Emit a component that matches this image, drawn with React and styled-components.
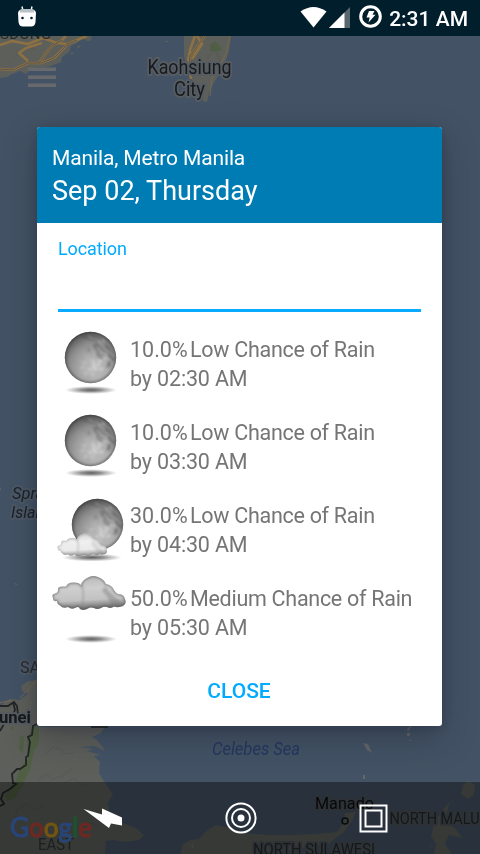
import React from "react";
import styled, { createGlobalStyle } from "styled-components";

const GlobalStyle = createGlobalStyle`
  * { box-sizing: border-box; }
  body { margin: 0; font-family: Roboto, sans-serif; background: #435365; }
`;

const Screen = styled.div`
  position: relative;
  width: 480px;
  height: 854px;
  overflow: hidden;
  display: flex;
  flex-direction: column;
`;

const MapCanvas = styled.svg`
  position: absolute;
  inset: 0;
  font-family: Roboto, sans-serif;
`;

const StatusBar = styled.header`
  position: relative;
  height: 36px;
  flex: none;
  display: flex;
  align-items: flex-start;
  justify-content: space-between;
  background: #001e2b;
  padding: 0 12px 0 17px;
  color: #fff;
`;

const StatusIcons = styled.div`
  display: flex;
  align-items: flex-start;
  height: 36px;
`;

const Clock = styled.time`
  font-size: 21px;
  font-weight: 500;
  line-height: 25px;
  margin: 7px 0 0 7px;
  white-space: nowrap;
`;

const Main = styled.main`
  position: relative;
  flex: 1;
  padding: 91px 38px 0 37px;
`;

const Dialog = styled.section`
  height: 599px;
  border-radius: 3px;
  overflow: hidden;
  background: #fff;
  display: flex;
  flex-direction: column;
  box-shadow: 0 12px 34px rgba(20, 22, 38, 0.32), 0 2px 12px rgba(20, 22, 38, 0.18);
`;

const DialogHeader = styled.div`
  height: 96px;
  flex: none;
  background: #007cb5;
  color: #fff;
  padding: 19px 15px 0;
  white-space: nowrap;
`;

const Place = styled.div`
  font-size: 21px;
  line-height: 25px;
  letter-spacing: -0.13px;
`;

const DateTitle = styled.h1`
  margin: 4px 0 0;
  font-size: 27px;
  line-height: 32px;
  font-weight: 400;
`;

const Field = styled.label`
  display: block;
  height: 89px;
  flex: none;
  margin: 0 21px;
  padding-top: 15px;
  border-bottom: 3px solid #0aabff;
  color: #00aaff;
  font-size: 18px;
  line-height: 21px;
  letter-spacing: -0.1px;
`;

const ForecastList = styled.ul`
  list-style: none;
  margin: 0;
  padding: 14px 0 0 15px;
`;

const ForecastRow = styled.li`
  display: flex;
  height: 83px;
`;

const WeatherIcon = styled.svg`
  width: 75px;
  height: 75px;
  flex: none;
  margin-top: -2px;
`;

const ForecastText = styled.div`
  margin: 9px 0 0 3px;
  color: #757575;
  font-size: 21.5px;
  line-height: 29px;
  letter-spacing: -0.28px;
  white-space: nowrap;
`;

const Chance = styled.div`
  display: flex;
`;

const Percent = styled.span`
  width: 60px;
  letter-spacing: 0;
`;

const Time = styled.div`
  letter-spacing: -0.15px;
`;

const CloseButton = styled.button`
  align-self: center;
  margin: 21px 0 0 -1px;
  border: 0;
  padding: 0;
  background: none;
  color: #00aaff;
  font: 500 21px/25px Roboto, sans-serif;
`;

const NavBar = styled.nav`
  position: relative;
  height: 72px;
  flex: none;
  display: flex;
  align-items: center;
  justify-content: space-between;
  padding: 0 92px 0 83px;
  background: rgba(0, 0, 0, 0.4);
`;

const NavIcon = styled.svg`
  flex: none;
  display: block;
`;

const forecast = [
  { id: "a", kind: "moon", pct: "10.0%", text: "Low Chance of Rain", time: "by 02:30 AM" },
  { id: "b", kind: "moon", pct: "10.0%", text: "Low Chance of Rain", time: "by 03:30 AM" },
  { id: "c", kind: "partly", pct: "30.0%", text: "Low Chance of Rain", time: "by 04:30 AM" },
  { id: "d", kind: "cloud", pct: "50.0%", text: "Medium Chance of Rain", time: "by 05:30 AM" },
];

function Moon({ cx, cy, id }) {
  return (
    <g transform={`translate(${cx - 26} ${cy - 26})`}>
      <defs>
        <radialGradient id={`m${id}`} cx="0.58" cy="0.7" r="0.76">
          <stop offset="0" stopColor="#c2c2c2" />
          <stop offset="0.35" stopColor="#adadad" />
          <stop offset="0.65" stopColor="#8c8c8c" />
          <stop offset="0.85" stopColor="#666" />
          <stop offset="1" stopColor="#404040" />
        </radialGradient>
        <clipPath id={`c${id}`}><circle cx="26" cy="26" r="25.7" /></clipPath>
        <filter id={`b${id}`}><feGaussianBlur stdDeviation="1" /></filter>
        <filter id={`h${id}`}><feGaussianBlur stdDeviation="0.8" /></filter>
      </defs>
      <circle cx="26" cy="26" r="25.7" fill={`url(#m${id})`} />
      <g clipPath={`url(#c${id})`}>
        <circle cx="26" cy="26" r="25.7" fill="none" stroke="#333" strokeWidth="3" opacity=".45" filter={`url(#b${id})`} />
        <g filter={`url(#b${id})`} fill="#505050">
          <path d="M13 5l8-2 9 1 7 4-5 2-10-3z" opacity=".45" />
          <path d="M28 13l5-2 3 4 5 1 1 5-6-1-6-2z" opacity=".4" />
          <path d="M40 12l5 3 4 6 2 8-3 1-4-5-2-6z" opacity=".5" />
          <path d="M31 19l5 1 4 5-3 3-5-3z" opacity=".35" />
          <path d="M43 30l4 0-1 5-4 2z" opacity=".5" />
          <path d="M22 16l4 1 0 4-3 0z" opacity=".25" />
        </g>
        <g filter={`url(#h${id})`} fill="none" stroke="#dedede" strokeLinecap="round">
          <path d="M24 5l4 2 5 1 3 3M38 8l2 2M33 16l3 3 1 3M38 17l4 1 3 3M38 25l2 2 3 0M46 21l3 4" strokeWidth="1.2" opacity=".45" />
          <path d="M28 29l2 3-1 4 3 2M33 34l2-2M25 38h1M20 31h.1M18 36h.1M36 38l2-1M28 43h.1M21 42h.1M34 29l3 1" strokeWidth="2" opacity=".6" />
        </g>
        <g filter={`url(#h${id})`} stroke="#777" fill="none" opacity=".35">
          <path d="M17 26l2 2M23 33l2 1M13 32l2 1M32 42l2-2M38 33l2 2M26 24l2-1M17 15l2-1M22 46l3 0" />
        </g>
      </g>
    </g>
  );
}

const cloudPath =
  "M1 22Q-1 18 3 17.500Q5 17 6 15Q5 10 11 10.500Q13 10.500 14 10.500Q16 6 22 6.500Q27 6 29 9Q30 4 36 1.500Q41 -1 46 1Q52 3 54 8Q60 9 62 14Q64 17 66 18Q72 18 73 23Q75 28 71 30Q66 32 62 30.500Q59 33 55 31Q52 30 49 32Q45 34 42 32Q38 31 36 32.500Q32 35 28 33Q27 30 24 31.500Q20 34 16 31Q11 33 8 29.500Q5 28 5 25Q1 26 1 22Z";

function Cloud({ id, transform, light }) {
  return (
    <g transform={transform}>
      <defs>
        <linearGradient id={`g${id}`} x1="0" y1="0" x2="0.12" y2="1">
          <stop offset="0" stopColor={light ? "#d0d0d0" : "#b5b5b5"} />
          <stop offset="0.4" stopColor={light ? "#efefef" : "#cecece"} />
          <stop offset="0.75" stopColor={light ? "#eaeaea" : "#c2c2c2"} />
          <stop offset="1" stopColor={light ? "#a0a0a0" : "#707070"} />
        </linearGradient>
        <filter id={`f${id}`}><feGaussianBlur stdDeviation="1.3" /></filter>
        <clipPath id={`k${id}`}><path d={cloudPath} /></clipPath>
      </defs>
      <path d={cloudPath} fill={`url(#g${id})`} />
      <g clipPath={`url(#k${id})`}>
        <g filter={`url(#f${id})`}>
          <path d="M30 9q2 8 1 14q-1 6 0 10" stroke="#888" strokeWidth="1.6" fill="none" opacity=".5" />
          <path d="M53 10q4 6 11 12l9 8h-14q-2-9-9-15z" fill="#777" opacity={light ? 0.2 : 0.4} />
        </g>
        <path d={cloudPath} fill="none" stroke="#555" strokeWidth="2.2" opacity={light ? 0.4 : 0.6} filter={`url(#f${id})`} />
      </g>
    </g>
  );
}

function Weather({ kind, id }) {
  const partly = kind === "partly";
  return (
    <WeatherIcon viewBox="0 0 75 75">
      <defs>
        <radialGradient id={`s${id}`}>
          <stop offset="0" stopColor="#606060" />
          <stop offset="0.4" stopColor="#777" stopOpacity=".8" />
          <stop offset="0.75" stopColor="#999" stopOpacity=".4" />
          <stop offset="1" stopColor="#aaa" stopOpacity="0" />
        </radialGradient>
      </defs>
      <ellipse cx={partly ? 40 : 39} cy={partly ? 67.5 : 66} rx={partly ? 30 : 26} ry="4" fill={`url(#s${id})`} />
      {kind === "moon" && <Moon cx={38.5} cy={33.5} id={id} />}
      {partly && <Moon cx={45.5} cy={34.5} id={id} />}
      {partly && <Cloud id={id} transform="translate(5 43.500) scale(.68)" light />}
      {kind === "cloud" && <Cloud id={id} transform="translate(0 3)" />}
    </WeatherIcon>
  );
}

function MapBackground() {
  const halo = { paintOrder: "stroke", stroke: "#565c61", strokeWidth: 4, strokeLinejoin: "round" };
  return (
    <MapCanvas width="480" height="854" viewBox="0 0 480 854">
      <rect width="480" height="854" fill="#435365" />
      <g fill="#5d5f5a">
        <path d="M0 36H92L87 41 82 38 77 43 71 46 69 52 62 57 61 62 51 66 43 68 40 67 32 68 26 74 20 71 10 75 8 77 0 78Z" />
        <path d="M76 47l5-2-2 3zM70 53l4-1-2 3zM85 40l7-3-2 4z" />
        <path d="M184 36H231L229 52 224 65 218 76 210 89 207 102 203 101 202 94 196 84 190 78 187 67 184 56Z" />
        <path d="M165 41h3v1h-3zM231 97l2 2-1 0z" />
        <path d="M37 680L28 681 21 686 22 691 28 694 20 700 10 699 0 706V854H105L106 841 113 840 125 842 139 840 144 835 136 828 123 823 114 822 110 815 108 803 113 794 105 783 99 773 100 762 94 756 101 755 87 751 94 749 80 747 94 746 105 751 101 745 97 740 92 737 101 733 105 727H37Z" />
        <path d="M181 854L182 845 190 840 199 839 207 830 216 825 231 828 246 833 267 835 288 835 316 834 337 832 344 822 345 813 356 812 352 821 344 832 328 844 304 848 275 852 262 854Z" />
        <path d="M434 854L436 844 431 836 434 824 443 809 452 800 454 795 449 805 446 817 456 811 447 824 455 828 462 838 449 835 445 844 452 854Z" />
        <path d="M461 794l2-9 6-4 6 4-1 10-6 4z" />
      </g>
      <g fill="#747067" opacity=".7">
        <path d="M363 743l5 1 4 9-5-3zM409 727l3-2-4 7-1-3zM407 733h3v3h-3zM409 739l3 2h-2zM363 775h2v4h-2zM14 583l4 1-2 1zM0 489l1-2v4zM191 845l3-2-1 6z" />
        <path d="M431 842l2 4-3 2zM444 822l6-3-4 5z" opacity=".4" />
      </g>
      <g fill="#505f43">
        <path d="M20 735l4 2-1 16-4-3zM33 725l6 2 0 15-5 9-4 18-8 17-7 12-8 3-2-5 11-16 4-12 8-9-1-18z" />
        <path d="M210 45l5-4 7 7-2 3h-10zM11 726l3 2-3 3z" />
      </g>
      <g fill="none" stroke="#4b4e4b" opacity=".25" strokeWidth="1.5">
        <path d="M45 714l11-9 4 7M45 755l8-8 7 2 5 5 9-1M38 780l9-6 5 5 11-3 9-8M12 826l6-17 8-5 9 6 10-5M65 783l9-5 8 8 8-3M75 832l17-9 6 4M207 58l8-8 5 10-8 20M14 57l13-10 8 2" />
      </g>
      <g fill="none" strokeLinejoin="round">
        <g stroke="#8d7144" strokeWidth="2.6">
          <path d="M0 69L13 70 28 63 41 63 54 58 64 48 67 44 77 40 87 36M0 45L12 41 28 44 43 38 57 43 67 44M39 63L46 53 52 46 62 40 66 36M28 61L19 53 26 48 42 43" />
          <path d="M205 36L198 45 190 56 189 66 191 79M195 36L190 50 188 61M197 36L202 44 192 59" />
        </g>
        <path stroke="#5b5548" d="M0 69L13 70 28 63 41 63 54 58 64 48 67 44 77 40M39 63L46 53 52 46 62 40M205 36L198 45 190 56 189 66" />
        <path stroke="#78694c" d="M210 96L212 79 219 68 226 53 230 36M0 703L11 700M20 698L36 681" />
      </g>
      <g stroke="#222624" fill="none" strokeWidth="1.8">
        <path d="M0 706L8 706 14 702 17 706 18 715M13 702L15 710 12 717M0 731L5 722M37 724L33 726 32 735 28 737 30 742 28 756 26 757V765L20 769 17 769 12 774 13 783 16 784 10 789 3 793 1 799 4 804 0 806" />
        <path d="M91 727H108" />
      </g>
      <text x="0" y="39" fill="#292c2d" fontSize="15" textLength="51">SDONG</text>
      <g fill="#171b1f" fontSize="20" {...halo}>
        <text x="147.500" y="74" textLength="84" lengthAdjust="spacingAndGlyphs">Kaohsiung</text>
        <text x="174" y="96" textLength="31" lengthAdjust="spacingAndGlyphs">City</text>
      </g>
      <g fill="#1b2026" fontSize="17" fontStyle="italic" {...halo} stroke="#4d5865">
        <text x="12" y="499" textLength="49" lengthAdjust="spacingAndGlyphs">Spratly</text>
        <text x="11" y="518" textLength="50" lengthAdjust="spacingAndGlyphs">Islands</text>
      </g>
      <text x="20" y="673" fontSize="16" fill="#272b2e" {...halo} stroke="#4d5865">SABAH</text>
      <text x="-1" y="723" fontSize="16" fontWeight="700" fill="#15191a" textLength="32" lengthAdjust="spacingAndGlyphs" {...halo}>unei</text>
      <text x="212" y="755" fontSize="19" fontStyle="italic" fill="#25375e" textLength="88" lengthAdjust="spacingAndGlyphs">Celebes Sea</text>
      <text x="38" y="850" fontSize="16" fill="#2f3434" textLength="36" lengthAdjust="spacingAndGlyphs">EAST</text>
      <g fill="#22282a" fontSize="16" {...halo} stroke="#4b5359">
        <text x="315" y="809" fill="#0b0f12" fontSize="17" textLength="59" lengthAdjust="spacingAndGlyphs">Manado</text>
        <text x="389.500" y="824" textLength="90" lengthAdjust="spacingAndGlyphs">NORTH MALU</text>
        <text x="253" y="855" textLength="122" lengthAdjust="spacingAndGlyphs">NORTH SULAWESI</text>
      </g>
      <circle cx="345" cy="821" r="3" fill="none" stroke="#101417" strokeWidth="1.5" />
      <text x="10" y="836.500" fontFamily="Lato, sans-serif" fontSize="27" fontWeight="400" textLength="82" lengthAdjust="spacingAndGlyphs" strokeWidth="1">
        <tspan fill="#4373cc" stroke="#4373cc">G</tspan><tspan fill="#ba4238" stroke="#ba4238">o</tspan><tspan fill="#bd8e20" stroke="#bd8e20">o</tspan><tspan fill="#4373cc" stroke="#4373cc">g</tspan><tspan fill="#2f8b50" stroke="#2f8b50">l</tspan><tspan fill="#ba4238" stroke="#ba4238">e</tspan>
      </text>
      <g fill="#68696c">
        <rect x="28" y="67.500" width="28" height="3.500" />
        <rect x="28" y="75.500" width="28" height="3.500" />
        <rect x="28" y="83.500" width="28" height="3.500" />
      </g>
    </MapCanvas>
  );
}

export default function App() {
  return (
    <Screen>
      <GlobalStyle />
      <MapBackground />
      <StatusBar>
        <svg width="20" height="36" viewBox="0 0 20 36">
          <path d="M5 6.500L6 11M15 6.500L14 11" stroke="#fff" strokeWidth="1.400" />
          <path d="M1 13Q1.500 9.500 5 9.500H15Q18.500 9.500 19 13L18.500 22Q18 26.500 14 26.500H6Q2 26.500 1.500 22Z" fill="#fff" />
          <path d="M3 10L5 9H15L17 10V12.500H3Z" fill="#b9c2c6" />
          <circle cx="5.500" cy="18" r="1.300" fill="#001e2b" />
          <circle cx="14.500" cy="18" r="1.300" fill="#001e2b" />
        </svg>
        <StatusIcons>
          <svg width="82" height="36" viewBox="300 0 82 36">
            <path d="M300.500 11.500Q313.500 2.500 326.500 11.500L313.500 27.500Z" fill="#fff" />
            <path d="M350 7V28H329Z" fill="#58666d" />
            <path d="M344.500 12.500V28H329Z" fill="#fff" />
            <circle cx="370.500" cy="16.500" r="9.800" fill="none" stroke="#fff" strokeWidth="3" />
            <path d="M369 11H374.500L372.500 14.800H375.500L368.500 22.500L369.700 17.500H366.500Z" fill="#fff" />
          </svg>
          <Clock>2:31 AM</Clock>
        </StatusIcons>
      </StatusBar>
      <Main>
        <Dialog>
          <DialogHeader>
            <Place>Manila, Metro Manila</Place>
            <DateTitle>Sep 02, Thursday</DateTitle>
          </DialogHeader>
          <Field>Location</Field>
          <ForecastList>
            {forecast.map((f) => (
              <ForecastRow key={f.id}>
                <Weather kind={f.kind} id={f.id} />
                <ForecastText>
                  <Chance><Percent>{f.pct}</Percent><span>{f.text}</span></Chance>
                  <Time>{f.time}</Time>
                </ForecastText>
              </ForecastRow>
            ))}
          </ForecastList>
          <CloseButton>CLOSE</CloseButton>
        </Dialog>
      </Main>
      <NavBar>
        <NavIcon width="40" height="30" viewBox="83 803 40 30">
          <path d="M83.500 809L102 814.500V808.500L122 817.500V825.500L111 823.500L109 828Z" fill="#fff" />
        </NavIcon>
        <NavIcon width="33" height="32" viewBox="0 0 33 32">
          <circle cx="16" cy="16" r="14.600" fill="none" stroke="#fff" strokeWidth="2" />
          <circle cx="16" cy="16" r="9" fill="none" stroke="#fff" strokeWidth="2" />
          <circle cx="16" cy="16" r="3.500" fill="#fff" />
        </NavIcon>
        <NavIcon width="29" height="29" viewBox="0 0 29 29">
          <path d="M1.500 1.500H27.500V27.500H1.500ZM6.500 6.500H22.500V22.500H6.500Z" fill="none" stroke="#fff" strokeWidth="2" />
        </NavIcon>
      </NavBar>
    </Screen>
  );
}
